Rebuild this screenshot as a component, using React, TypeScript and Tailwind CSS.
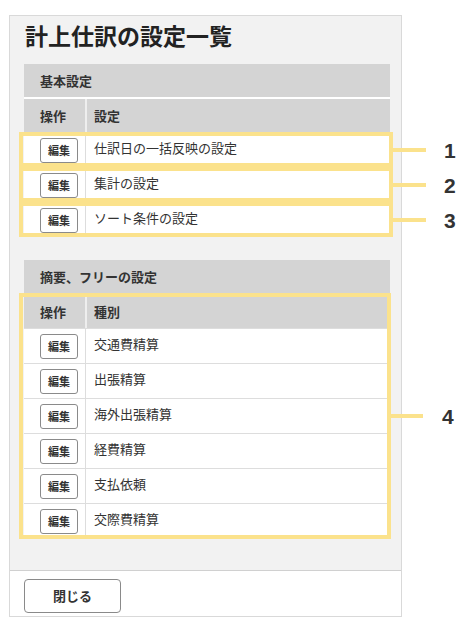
import React from "react"

const FONT = "font-['Noto_Sans_CJK_JP','Noto_Sans',sans-serif]"

const basicRows = ["仕訳日の一括反映の設定", "集計の設定", "ソート条件の設定"]
const freeRows = ["交通費精算", "出張精算", "海外出張精算", "経費精算", "支払依頼", "交際費精算"]

// 注釈（黄色の枠から右に伸びる線と番号）
function Callout({ num, lineW = "w-[37px]" }: { num: string; lineW?: string }) {
  return (
    <>
      <div className={`absolute left-full top-1/2 -translate-y-1/2 h-[4px] bg-[#fbe28c] ${lineW}`} />
      <div className="absolute left-[calc(100%+55px)] top-1/2 -translate-y-1/2 text-[21px] font-bold text-[#333] font-['Liberation_Sans',sans-serif] leading-none">
        {num}
      </div>
    </>
  )
}

function EditButton() {
  return (
    <button className="ml-[16px] w-[38px] h-[25px] rounded-[3px] border border-[#8a8a8a] bg-white text-[11px] font-bold text-[#333] leading-none">
      編集
    </button>
  )
}

function HeaderRow({ label }: { label: string }) {
  return (
    <div className="grid grid-cols-[63px_1fr] h-[35px] border-t-2 border-white bg-[#d4d4d4] text-[13px] font-bold text-[#333]">
      <div className="flex items-center pl-[16px] border-r-2 border-[#eeeeee]">操作</div>
      <div className="flex items-center pl-[7px]">{label}</div>
    </div>
  )
}

function BodyRow({ text }: { text: string }) {
  return (
    <div className="grid grid-cols-[62px_1fr] h-[35px] border-t border-[#dddddd] bg-white">
      <div className="flex items-center border-r border-[#dddddd]">
        <EditButton />
      </div>
      <div className="flex items-center pl-[8px] pb-[4px] text-[13px] text-[#333]">{text}</div>
    </div>
  )
}

function SectionHeader({ title }: { title: string }) {
  return (
    <div className="h-[33px] bg-[#d4d4d4] flex items-center pl-[16px] text-[13px] font-bold text-[#333]">
      {title}
    </div>
  )
}

export default function App() {
  return (
    <div className={`w-[472px] h-[631px] bg-white pt-[15px] pl-[9px] ${FONT}`}>
      <div className="w-[393px] border border-[#d9d9d9] bg-[#f2f2f2]">
        <div className="pl-[14px] pr-[11px] pt-[4px] pb-[32px]">
          <h1 className="text-[23px] leading-[30px] font-bold text-[#222] pl-[1px]">計上仕訳の設定一覧</h1>

          {/* 基本設定 */}
          <div className="mt-[14px]">
            <SectionHeader title="基本設定" />
            <HeaderRow label="設定" />
            {basicRows.map((r, i) => (
              <div key={r} className="relative">
                <BodyRow text={r} />
                <div className="absolute -left-[5px] -right-[3px] inset-y-0 border-4 border-[#fbe28c]">
                  <Callout num={String(i + 1)} />
                </div>
              </div>
            ))}
          </div>

          {/* 摘要、フリーの設定 */}
          <div className="mt-[23px]">
            <SectionHeader title="摘要、フリーの設定" />
            <div className="relative">
              <HeaderRow label="種別" />
              {freeRows.map((r) => (
                <BodyRow key={r} text={r} />
              ))}
              <div className="absolute -left-[5px] -right-[1px] top-0 -bottom-[1px] border-4 border-[#fbe28c]">
                <Callout num="4" lineW="w-[36px]" />
              </div>
            </div>
          </div>
        </div>

        <div className="border-t border-[#d0d0d0] bg-white pl-[14px] pt-[8px] pb-[3px]">
          <button className="w-[97px] h-[34px] rounded-[4px] border border-[#8a8a8a] bg-white text-[13px] font-bold text-[#333]">
            閉じる
          </button>
        </div>
      </div>
    </div>
  )
}
